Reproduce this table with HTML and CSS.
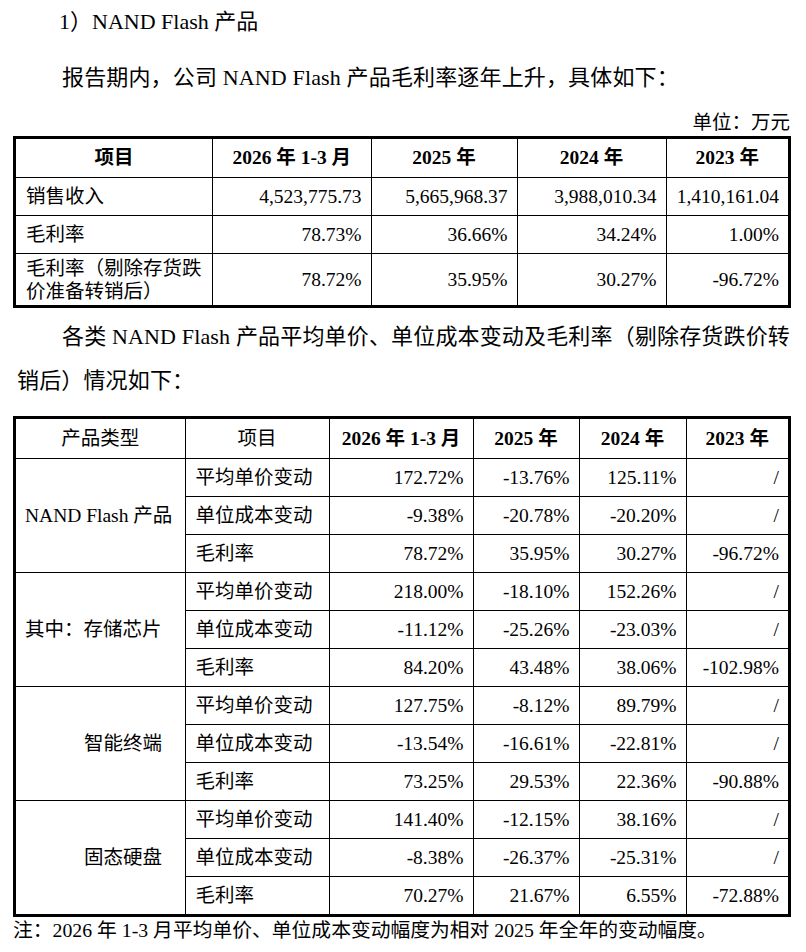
FILE: index.html
```html
<!DOCTYPE html>
<html lang="zh-CN">
<head>
<meta charset="utf-8">
<title>NAND Flash 产品</title>
<link rel="stylesheet" href="styles.css">
</head>
<body>
<div class="page">
  <p class="title">1）NAND Flash 产品</p>
  <p class="para p1">报告期内，公司 NAND Flash 产品毛利率逐年上升，具体如下：</p>
  <p class="unit">单位：万元</p>
  <table class="tbl t1">
    <colgroup>
      <col class="c1a"><col class="c1b"><col class="c1c"><col class="c1d"><col class="c1e">
    </colgroup>
    <tr class="head">
      <th class="bold-cjk">项目</th>
      <th>2026 年 1-3 月</th>
      <th>2025 年</th>
      <th>2024 年</th>
      <th>2023 年</th>
    </tr>
    <tr>
      <td class="lbl">销售收入</td>
      <td class="num">4,523,775.73</td>
      <td class="num">5,665,968.37</td>
      <td class="num">3,988,010.34</td>
      <td class="num">1,410,161.04</td>
    </tr>
    <tr>
      <td class="lbl">毛利率</td>
      <td class="num">78.73%</td>
      <td class="num">36.66%</td>
      <td class="num">34.24%</td>
      <td class="num">1.00%</td>
    </tr>
    <tr class="tall">
      <td class="lbl two">毛利率（剔除存货跌价准备转销后）</td>
      <td class="num">78.72%</td>
      <td class="num">35.95%</td>
      <td class="num">30.27%</td>
      <td class="num">-96.72%</td>
    </tr>
  </table>
  <p class="para p2"><span class="l1">各类 NAND Flash 产品平均单价、单位成本变动及毛利率（剔除存货跌价转</span><span class="l2">销后）情况如下：</span></p>
  <table class="tbl t2">
    <colgroup>
      <col class="c2a"><col class="c2b"><col class="c2c"><col class="c2d"><col class="c2e"><col class="c2f">
    </colgroup>
    <tr class="head">
      <th class="reg-cjk">产品类型</th>
      <th class="reg-cjk">项目</th>
      <th>2026 年 1-3 月</th>
      <th>2025 年</th>
      <th>2024 年</th>
      <th>2023 年</th>
    </tr>
    <tr>
      <td class="grp" rowspan="3">NAND Flash 产品</td>
      <td class="lbl">平均单价变动</td>
      <td class="num">172.72%</td><td class="num">-13.76%</td><td class="num">125.11%</td><td class="num">/</td>
    </tr>
    <tr>
      <td class="lbl">单位成本变动</td>
      <td class="num">-9.38%</td><td class="num">-20.78%</td><td class="num">-20.20%</td><td class="num">/</td>
    </tr>
    <tr>
      <td class="lbl">毛利率</td>
      <td class="num">78.72%</td><td class="num">35.95%</td><td class="num">30.27%</td><td class="num">-96.72%</td>
    </tr>
    <tr>
      <td class="grp" rowspan="3">其中：存储芯片</td>
      <td class="lbl">平均单价变动</td>
      <td class="num">218.00%</td><td class="num">-18.10%</td><td class="num">152.26%</td><td class="num">/</td>
    </tr>
    <tr>
      <td class="lbl">单位成本变动</td>
      <td class="num">-11.12%</td><td class="num">-25.26%</td><td class="num">-23.03%</td><td class="num">/</td>
    </tr>
    <tr>
      <td class="lbl">毛利率</td>
      <td class="num">84.20%</td><td class="num">43.48%</td><td class="num">38.06%</td><td class="num">-102.98%</td>
    </tr>
    <tr>
      <td class="grp sub" rowspan="3">智能终端</td>
      <td class="lbl">平均单价变动</td>
      <td class="num">127.75%</td><td class="num">-8.12%</td><td class="num">89.79%</td><td class="num">/</td>
    </tr>
    <tr>
      <td class="lbl">单位成本变动</td>
      <td class="num">-13.54%</td><td class="num">-16.61%</td><td class="num">-22.81%</td><td class="num">/</td>
    </tr>
    <tr>
      <td class="lbl">毛利率</td>
      <td class="num">73.25%</td><td class="num">29.53%</td><td class="num">22.36%</td><td class="num">-90.88%</td>
    </tr>
    <tr>
      <td class="grp sub" rowspan="3">固态硬盘</td>
      <td class="lbl">平均单价变动</td>
      <td class="num">141.40%</td><td class="num">-12.15%</td><td class="num">38.16%</td><td class="num">/</td>
    </tr>
    <tr>
      <td class="lbl">单位成本变动</td>
      <td class="num">-8.38%</td><td class="num">-26.37%</td><td class="num">-25.31%</td><td class="num">/</td>
    </tr>
    <tr>
      <td class="lbl">毛利率</td>
      <td class="num">70.27%</td><td class="num">21.67%</td><td class="num">6.55%</td><td class="num">-72.88%</td>
    </tr>
  </table>
  <p class="note">注：2026 年 1-3 月平均单价、单位成本变动幅度为相对 2025 年全年的变动幅度。</p>
</div>
</body>
</html>
```

FILE: styles.css
```css
html, body {
  margin: 0;
  padding: 0;
  background: #ffffff;
}

body {
  color: #000000;
  font-family: "Liberation Serif", "Noto Sans CJK SC", serif;
}

.page {
  width: 806px;
}

p {
  margin: 0;
}

.title {
  font-size: 22px;
  line-height: 44px;
  padding-left: 59px;
}

.para {
  font-size: 22px;
  line-height: 44px;
  letter-spacing: 0.15px;
  text-indent: 45px;
  padding: 0 16px 0 17px;
  text-align: justify;
}

.p1 {
  margin-top: 12px;
}

.unit {
  font-size: 19.5px;
  line-height: 26px;
  text-align: right;
  padding-right: 16px;
  margin-top: 10px;
}

.p2 {
  margin-top: 7px;
}

.p2 .l1 {
  display: block;
  text-align: justify;
  text-align-last: justify;
}

.p2 .l2 {
  display: block;
  text-indent: 0;
}

.tbl {
  border-collapse: collapse;
  table-layout: fixed;
  width: 775px;
  margin-left: 13px;
  border: 3px solid #000000;
  font-size: 19.5px;
}

.t2 {
  margin-top: 13px;
}

.tbl th,
.tbl td {
  border: 1px solid #000000;
  height: 37px;
  padding: 0 9px;
  line-height: 24px;
  vertical-align: middle;
  white-space: nowrap;
}

.tbl th {
  font-weight: bold;
  text-align: center;
}

.t1 .head th {
  height: 38px;
}

.t2 .head th {
  height: 39px;
}

.tbl th.reg-cjk {
  font-weight: normal;
}

.tbl td.lbl {
  text-align: left;
  padding-left: 10px;
}

.tbl td.num {
  text-align: right;
}

.tbl td.two {
  white-space: normal;
  line-height: 23px;
  padding-left: 10px;
  padding-right: 4px;
}

.tbl .tall td {
  height: 51px;
}

.tbl td.grp {
  text-align: left;
  padding-left: 9px;
}

.tbl td.grp.sub {
  padding-left: 68px;
}

.c1a { width: 198px; }
.c1b { width: 158.5px; }
.c1c { width: 146px; }
.c1d { width: 149px; }
.c1e { width: 123.5px; }

.c2a { width: 170.5px; }
.c2b { width: 144px; }
.c2c { width: 144px; }
.c2d { width: 106px; }
.c2e { width: 107px; }
.c2f { width: 103.5px; }

.note {
  font-size: 19.8px;
  line-height: 26px;
  letter-spacing: 0;
  padding-left: 13px;
}
```
